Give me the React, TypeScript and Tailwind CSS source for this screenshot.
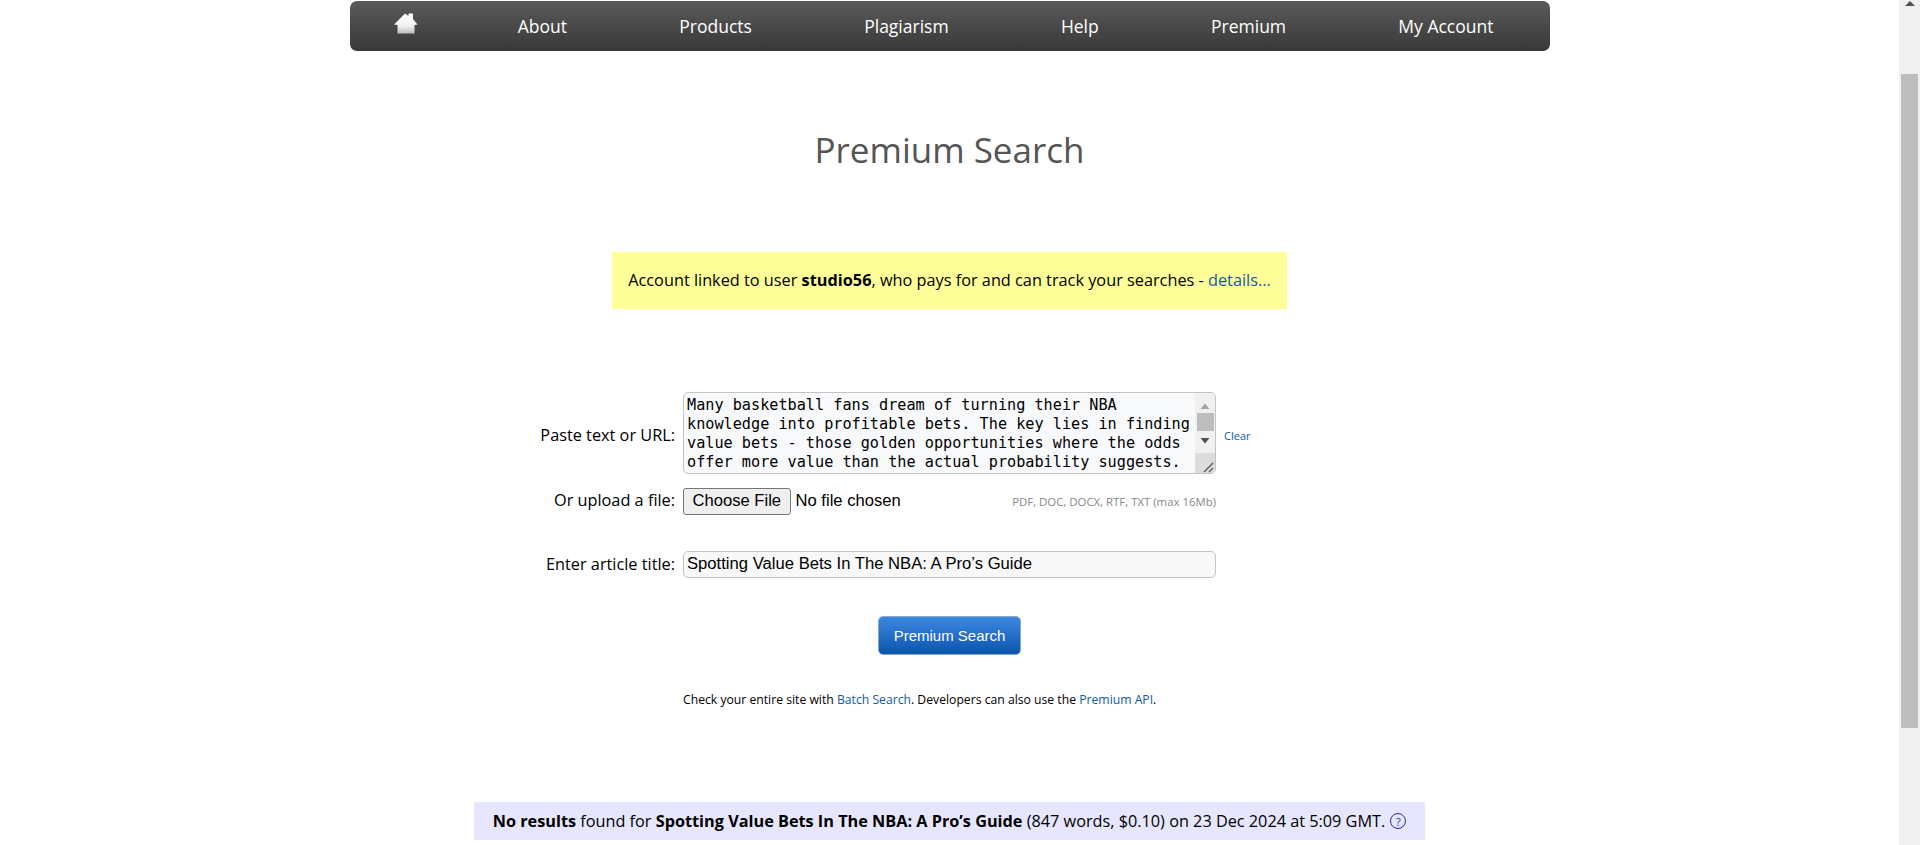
const navItems = ['About', 'Products', 'Plagiarism', 'Help', 'Premium', 'My Account']

const articleText =
  'Many basketball fans dream of turning their NBA knowledge into profitable bets. The key lies in finding value bets - those golden opportunities where the odds offer more value than the actual probability suggests.'

function HomeIcon() {
  return (
    <svg width="24" height="21" viewBox="0 0 24 21" className="blur-[0.4px]">
      <defs>
        <linearGradient id="house" x1="0" y1="0" x2="0" y2="1">
          <stop offset="0" stopColor="#ffffff" />
          <stop offset="0.6" stopColor="#f2f2f2" />
          <stop offset="1" stopColor="#bdbdbd" />
        </linearGradient>
      </defs>
      <path d="M0 11.5 L11 0.5 L14.5 3 L14.5 0.5 L19 0.5 L19 6 L23.5 11.5 L20.5 12 L20.5 20.5 L3.5 20.5 L3.5 12 Z" fill="url(#house)" />
    </svg>
  )
}

export default function App() {
  return (
    <div className="flex h-[845px] overflow-hidden bg-white font-['Open_Sans',sans-serif] text-black">
      <main className="flex-1 min-w-0">
        <nav className="mx-auto mt-px flex h-[50px] w-[1200px] items-center justify-between rounded-[7px] bg-gradient-to-b from-[#5a5a5a] to-[#393939] pl-[44px] pr-[56px] text-[17.5px] text-white">
          <a className="-mt-[5px] -mr-[12px] block w-[24px]"><HomeIcon /></a>
          {navItems.map((item) => (
            <a key={item} className="whitespace-nowrap">{item}</a>
          ))}
        </nav>

        <h1 className="mt-[76px] text-center text-[35px] leading-[46px] text-[#555555]">Premium Search</h1>

        <div className="mx-auto mt-[79px] flex h-[57px] w-[675px] items-center justify-center bg-[#ffff99] text-[16.3px]">
          <p>
            Account linked to user <b>studio56</b>, who pays for and can track your searches - <a className="text-[#0e5ca8]">details...</a>
          </p>
        </div>

        <form className="mt-[83px] grid grid-cols-[1fr_533px_1fr] items-center gap-x-2 text-[16.3px]">
          <label className="mt-[4px] text-right">Paste text or URL:</label>
          <div className="relative h-[82px]">
            <textarea
              readOnly
              defaultValue={articleText}
              className="block h-full w-full resize-none overflow-hidden rounded-[5px] border border-[#c4c4c4] bg-[#f8f9fb] pt-[3px] pl-[3px] pr-[20px] font-['DejaVu_Sans_Mono',monospace] text-[15.2px] leading-[19px] outline-none"
            />
            <div className="absolute inset-y-px right-px flex w-[20px] flex-col items-center rounded-r-[5px] bg-[#f0f0f0]">
              <svg width="12" height="8" viewBox="0 0 12 8" className="mt-[9px] shrink-0"><path d="M1.5 7 L6 1.5 L10.5 7 Z" fill="#a3a3a3" /></svg>
              <div className="mt-[3px] h-[18px] w-[17px] shrink-0 bg-[#bdbdbd]" />
              <svg width="12" height="8" viewBox="0 0 12 8" className="mt-[6px] shrink-0"><path d="M1.5 1 L10.5 1 L6 6.5 Z" fill="#505050" /></svg>
              <div className="mt-auto flex h-[20px] w-full items-end justify-end rounded-br-[5px] bg-[#dcdcdc]">
                <svg width="14" height="14" viewBox="0 0 14 14"><path d="M3 13 L12 4 M8 13 L12 9" stroke="#555555" strokeWidth="1.3" /></svg>
              </div>
            </div>
          </div>
          <a className="mt-[6px] text-[11px] text-[#0e5ca8]">Clear</a>

          <label className="mt-[12px] text-right">Or upload a file:</label>
          <div className="mt-[14px] flex h-[27px] items-center justify-between">
            <input
              type="file"
              className="w-[290px] font-['Liberation_Sans',sans-serif] text-[16.6px] file:mr-[5px] file:h-[27px] file:rounded-[3px] file:border file:border-solid file:border-[#767676] file:bg-[#efefef] file:px-[8.5px] file:text-[16.6px]"
            />
            <span className="text-[11.4px] text-[#888888]">PDF, DOC, DOCX, RTF, TXT (max 16Mb)</span>
          </div>
          <span className="mt-[14px]" />

          <label className="mt-[36px] text-right">Enter article title:</label>
          <input
            readOnly
            value="Spotting Value Bets In The NBA: A Pro’s Guide"
            className="mt-[36px] h-[27px] w-full rounded-[5px] border border-[#c4c4c4] bg-[#f8f8f8] px-[3px] pb-[2px] font-['Liberation_Sans',sans-serif] text-[16.65px] outline-none"
          />
          <span className="mt-[36px]" />
        </form>

        <div className="mt-[38px] flex justify-center">
          <button className="h-[39px] w-[143px] rounded-[5px] border border-[#8fa8c8] bg-gradient-to-b from-[#3b88e2] to-[#0a55ad] pt-px font-['Liberation_Sans',sans-serif] text-[15px] text-white">
            Premium Search
          </button>
        </div>

        <p className="mx-auto mt-[36px] w-[533px] text-[12.2px] leading-[18px]">
          Check your entire site with <a className="text-[#0e5ca8]">Batch Search</a>. Developers can also use the <a className="text-[#0e5ca8]">Premium API</a>.
        </p>

        <div className="mx-auto mt-[93px] flex h-[38px] w-[951px] items-center justify-center bg-[#e6e6ff] text-[16.25px]">
          <p>
            <b>No results</b> found for <b>Spotting Value Bets In The NBA: A Pro’s Guide</b> (847 words, $0.10) on 23 Dec 2024 at 5:09 GMT.
          </p>
          <span className="ml-[5px] flex h-4 w-4 items-center justify-center rounded-full border-[1.5px] border-[#2a2aa8] text-[11px] leading-none text-[#2a2aa8]">?</span>
        </div>
      </main>

      <aside className="flex w-[21px] shrink-0 flex-col items-center bg-[#f0f0f0]">
        <svg width="10" height="5" viewBox="0 0 10 5" className="mt-px shrink-0"><path d="M0 5 L5 0 L10 5 Z" fill="#505050" /></svg>
        <div className="mt-[68px] h-[654px] w-[17px] shrink-0 bg-[#bdbdbd]" />
      </aside>
    </div>
  )
}
